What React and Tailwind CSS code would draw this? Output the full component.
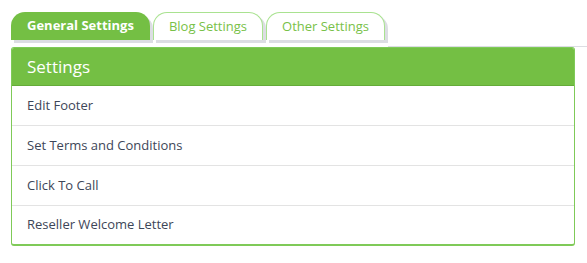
import React from "react";

const tabs = ["General Settings", "Blog Settings", "Other Settings"];
const rows = [
  "Edit Footer",
  "Set Terms and Conditions",
  "Click To Call",
  "Reseller Welcome Letter",
];

export default function App() {
  return (
    <div
      className="w-[587px] h-[263px] bg-white pt-[12px] pl-[11px]"
      style={{ fontFamily: '"Open Sans", "Liberation Sans", sans-serif' }}
    >
      {/* tab strip */}
      <div className="flex h-[35px]">
        {tabs.map((t, i) => (
          <div
            key={t}
            className={
              i === 0
                ? "h-[28px] mr-[3px] px-[16px] flex items-center rounded-t-[14px] bg-[#74bf44] text-white text-[13px] font-bold shadow-[3px_3px_0_#dcdde3]"
                : "h-[28px] mr-[3px] px-[15px] flex items-center rounded-t-[14px] bg-white border border-b-0 border-[#a9e290] text-[#78c148] text-[13px] shadow-[3px_3px_0_#dcdde3]"
            }
          >
            {t}
          </div>
        ))}
        <div className="flex-1 border-b border-[#dcdde3]" />
      </div>

      {/* panel */}
      <div className="w-[564px] border border-b-2 border-[#7fca58] rounded-[3px] overflow-hidden">
        <div className="h-[38px] bg-[#74bf44] border-b border-[#65ab39] flex items-center px-[15px] text-white text-[17px]">
          Settings
        </div>
        {rows.map((r, i) => (
          <div
            key={r}
            className={
              i < rows.length - 1
                ? "h-10 border-b border-[#e3e3e3] flex items-center px-[15px] text-[13px] text-[#3d4658]"
                : "h-[38px] flex items-center px-[15px] text-[13px] text-[#3d4658]"
            }
          >
            {r}
          </div>
        ))}
      </div>
    </div>
  );
}
